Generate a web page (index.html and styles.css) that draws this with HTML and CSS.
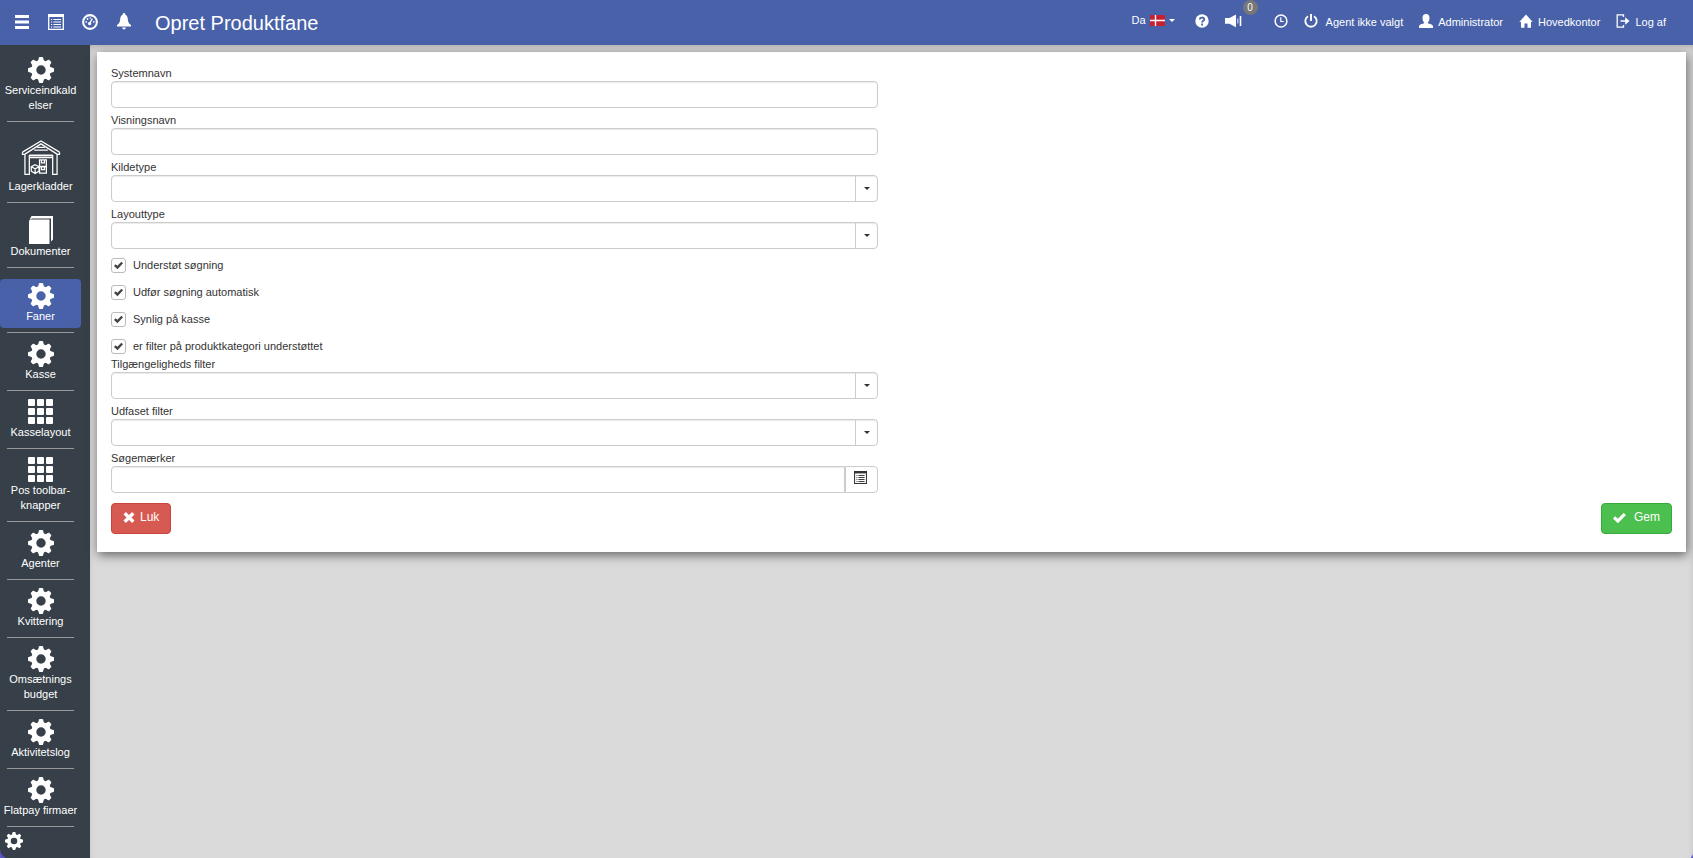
FILE: index.html
```html
<!DOCTYPE html>
<html lang="da">
<head>
  <meta charset="UTF-8">
  <title>Opret Produktfane</title>
  <link rel="stylesheet" href="styles.css">
</head>
<body>

  <!-- Shared icons -->
  <svg class="sprite" aria-hidden="true">
    <symbol id="gear" viewBox="0 0 26 26">
      <circle cx="13" cy="13" r="7.3" fill="none" stroke="currentColor" stroke-width="5.2"/>
      <g fill="currentColor">
        <path id="tooth" d="M9.8 4.5L11 .6q.2-.6.8-.6h2.4q.6 0 .8.6l1.2 3.9z"/>
        <use href="#tooth" transform="rotate(45 13 13)"/>
        <use href="#tooth" transform="rotate(90 13 13)"/>
        <use href="#tooth" transform="rotate(135 13 13)"/>
        <use href="#tooth" transform="rotate(180 13 13)"/>
        <use href="#tooth" transform="rotate(225 13 13)"/>
        <use href="#tooth" transform="rotate(270 13 13)"/>
        <use href="#tooth" transform="rotate(315 13 13)"/>
      </g>
    </symbol>
    <symbol id="grid" viewBox="0 0 26 26">
      <g fill="currentColor">
        <rect x="0" y="0" width="7" height="7" rx="1"/><rect x="9" y="0" width="7" height="7" rx="1"/><rect x="18" y="0" width="7" height="7" rx="1"/>
        <rect x="0" y="9" width="7" height="7" rx="1"/><rect x="9" y="9" width="7" height="7" rx="1"/><rect x="18" y="9" width="7" height="7" rx="1"/>
        <rect x="0" y="18" width="7" height="7" rx="1"/><rect x="9" y="18" width="7" height="7" rx="1"/><rect x="18" y="18" width="7" height="7" rx="1"/>
      </g>
    </symbol>
    <symbol id="list" viewBox="0 0 16 16">
      <path d="M.7 1h14.6v14.3H.7z" fill="none" stroke="currentColor" stroke-width="1.3"/>
      <path d="M0 0h16v3H0z" fill="currentColor"/>
      <path d="M3 5.5h1.2M3 8h1.2M3 10.5h1.2M3 13h1.2M5.5 5.5H13M5.5 8H13M5.5 10.5H13M5.5 13H13" stroke="currentColor" stroke-width="1.2"/>
    </symbol>
    <symbol id="check" viewBox="0 0 14 12">
      <path d="M0 6.6L2.4 4.2l2.8 2.6L11.5.5 14 2.8 5.3 11.6z" fill="currentColor"/>
    </symbol>
  </svg>

  <header class="topbar">
    <div class="tools">
      <button type="button" aria-label="Menu">
        <svg width="16" height="16" viewBox="0 0 16 16"><path d="M1 2.500h14M1 8h14M1 13.500h14" stroke="currentColor" stroke-width="3"/></svg>
      </button>
      <button type="button" aria-label="Liste">
        <svg width="16" height="16"><use href="#list"/></svg>
      </button>
      <button type="button" aria-label="Dashboard">
        <svg width="16" height="16" viewBox="0 0 16 16">
          <circle cx="8" cy="8" r="6.9" fill="none" stroke="currentColor" stroke-width="2.1"/>
          <path d="M7.3 9.8L10.4 4.6" stroke="currentColor" stroke-width="1.3"/>
          <circle cx="7.6" cy="9.6" r="1.7" fill="currentColor"/>
          <circle cx="4.2" cy="7.8" r=".9" fill="currentColor"/><circle cx="5.5" cy="5" r=".9" fill="currentColor"/><circle cx="8.2" cy="4" r=".8" fill="currentColor"/><circle cx="11.8" cy="7.8" r=".9" fill="currentColor"/>
        </svg>
      </button>
      <button type="button" aria-label="Notifikationer">
        <svg width="16" height="17" viewBox="0 0 16 17"><path d="M8 0c.8 0 1.300.6 1.200 1.400 1.600.7 2.500 2.300 2.600 4.600.1 3 1 4.600 3.200 6.100v1.400H1v-1.400c2.200-1.500 3.100-3.100 3.200-6.100.1-2.300 1-3.900 2.600-4.600C6.700.6 7.200 0 8 0zM6.200 14.500h3.600c0 1-.7 1.900-1.800 1.900s-1.800-.9-1.800-1.900z" fill="currentColor"/></svg>
      </button>
    </div>
    <h1>Opret Produktfane</h1>
    <nav class="account">
      <button type="button" class="language">
        Da
        <svg width="15" height="11" viewBox="0 0 15 11"><path d="M0 0h15v11H0z" fill="#c8202f"/><path d="M5.500 0v11M0 5.500h15" stroke="#fff" stroke-width="1.400"/></svg>
        <span class="caret"></span>
      </button>
      <a href="#" aria-label="Hjælp">
        <svg width="14" height="14" viewBox="0 0 14 14"><circle cx="7" cy="7" r="6.700" fill="currentColor"/><path d="M4.800 5.500C4.800 2.900 9.300 2.900 9.300 5.300 9.300 6.900 7.100 6.800 7.100 8.500M7.100 9.500v1.900" fill="none" stroke="#4861a9" stroke-width="1.800"/></svg>
      </a>
      <a href="#" class="sound" aria-label="Lyd">
        <svg width="17" height="14" viewBox="0 0 17 14"><path d="M0 4h4.500L11 .5v12.700L4.500 9.800H0z" fill="currentColor"/><path d="M12.800 4.500v5" stroke="currentColor" stroke-width="1.200" opacity=".7"/><path d="M15.500 2v10" stroke="currentColor" stroke-width="1.600"/></svg>
        <span class="badge">0</span>
      </a>
      <a href="#" aria-label="Historik">
        <svg width="14" height="14" viewBox="0 0 14 14"><circle cx="7" cy="7" r="5.900" fill="none" stroke="currentColor" stroke-width="1.500"/><path d="M6.800 3.300v4.200h3" fill="none" stroke="currentColor" stroke-width="1.200"/></svg>
      </a>
      <a href="#" class="agent">
        <svg width="14" height="14" viewBox="0 0 14 14"><path d="M4 2.200a5.700 5.700 0 1 0 6 0" fill="none" stroke="currentColor" stroke-width="1.800"/><path d="M7 0v7" stroke="currentColor" stroke-width="1.900"/></svg>
        <span>Agent ikke valgt</span>
      </a>
      <a href="#">
        <svg width="14" height="14" viewBox="0 0 14 14"><path d="M7 0c2.300 0 3.500 1.600 3.500 3.900 0 2-.7 3.600-1.700 4.500v.8c1.800.6 5.200 1.300 5.200 3.200V14H0v-1.600c0-1.900 3.400-2.600 5.200-3.200v-.8C4.200 7.500 3.500 5.900 3.500 3.900 3.500 1.600 4.700 0 7 0z" fill="currentColor"/></svg>
        <span>Administrator</span>
      </a>
      <a href="#">
        <svg width="14" height="14" viewBox="0 0 14 14"><path d="M7 .5L13.700 8H12v5.800H8.500V9.500h-3v4.300H2V8H.3z" fill="currentColor"/></svg>
        <span>Hovedkontor</span>
      </a>
      <a href="#">
        <svg width="14" height="14" viewBox="0 0 14 14"><path d="M7.500 3V.8H1.200v12.400h6.300V11" fill="none" stroke="currentColor" stroke-width="1.300"/><path d="M4.500 6.200h4.700V3.300L13.500 7l-4.300 3.700V7.800H4.500z" fill="currentColor"/></svg>
        <span>Log af</span>
      </a>
    </nav>
  </header>

  <div class="layout">
    <aside class="sidebar">
      <ul class="menu">
        <li class="first"><a href="#"><svg width="26" height="26"><use href="#gear"/></svg>Serviceindkald<br>elser</a></li>
        <li class="stock"><a href="#">
          <svg width="40" height="37" viewBox="0 0 40 38" fill="none" stroke="currentColor" stroke-width="1.300">
            <path d="M1 13.500L20 2l19 11.500M1 13.500v2.300h2.500v20.500h4.500V17h24v19.300h4.500V15.800H39v-2.300M3.500 15.500L20 5l16.500 10.500"/>
            <path d="M16 8.500h8M13 11.500h14M8 16.500h24M8 19h24"/>
            <path d="M18.500 21.500h7v6.500h-7zM18.500 28.500h7v6.500h-7zM20.500 21.500v3h3v-3M20.500 28.500v3h3v-3"/>
            <path d="M14 26.500l4 2v4.500l-4 2.500-4-2.500v-4.500zM10 28.500l4 2 4-2M14 30.500v5"/>
          </svg>Lagerkladder</a></li>
        <li class="docs"><a href="#">
          <svg width="26" height="28" viewBox="0 0 26 28"><path d="M3.500 0H25v23.500l-2 2V2.500H4L1.500 4z" fill="currentColor"/><path d="M1 5.500q0-2 2-2h18.500V28H1z" fill="currentColor"/></svg>Dokumenter</a></li>
        <li class="active"><a href="#" aria-current="page"><svg width="26" height="26"><use href="#gear"/></svg>Faner</a></li>
        <li><a href="#"><svg width="26" height="26"><use href="#gear"/></svg>Kasse</a></li>
        <li><a href="#"><svg width="26" height="26"><use href="#grid"/></svg>Kasselayout</a></li>
        <li><a href="#"><svg width="26" height="26"><use href="#grid"/></svg>Pos toolbar-<br>knapper</a></li>
        <li><a href="#"><svg width="26" height="26"><use href="#gear"/></svg>Agenter</a></li>
        <li><a href="#"><svg width="26" height="26"><use href="#gear"/></svg>Kvittering</a></li>
        <li><a href="#"><svg width="26" height="26"><use href="#gear"/></svg>Omsætnings<br>budget</a></li>
        <li><a href="#"><svg width="26" height="26"><use href="#gear"/></svg>Aktivitetslog</a></li>
        <li><a href="#"><svg width="26" height="26"><use href="#gear"/></svg>Flatpay firmaer</a></li>
      </ul>
      <button type="button" class="settings" aria-label="Indstillinger"><svg width="18" height="18"><use href="#gear"/></svg></button>
    </aside>

    <main>
      <form class="panel">
        <div class="fields">
          <label for="systemName">Systemnavn</label>
          <input type="text" id="systemName">

          <label for="displayName">Visningsnavn</label>
          <input type="text" id="displayName">

          <label for="sourceType">Kildetype</label>
          <div class="combo"><select id="sourceType"><option value=""></option></select></div>

          <label for="layoutType">Layouttype</label>
          <div class="combo"><select id="layoutType"><option value=""></option></select></div>

          <div class="checks">
            <label><input type="checkbox" checked> Understøt søgning</label>
            <label><input type="checkbox" checked> Udfør søgning automatisk</label>
            <label><input type="checkbox" checked> Synlig på kasse</label>
            <label><input type="checkbox" checked> er filter på produktkategori understøttet</label>
          </div>

          <label for="availability">Tilgængeligheds filter</label>
          <div class="combo"><select id="availability"><option value=""></option></select></div>

          <label for="phasedOut">Udfaset filter</label>
          <div class="combo"><select id="phasedOut"><option value=""></option></select></div>

          <label for="searchTags">Søgemærker</label>
          <div class="picker">
            <input type="text" id="searchTags">
            <button type="button" aria-label="Vælg søgemærker"><svg width="13" height="13"><use href="#list"/></svg></button>
          </div>
        </div>

        <div class="actions">
          <button type="button" class="btn close">
            <svg width="12" height="11" viewBox="0 0 12 11"><path d="M1.700 1.200l8.600 8.600M10.300 1.200L1.700 9.800" stroke="currentColor" stroke-width="3.400"/></svg>
            Luk
          </button>
          <button type="submit" class="btn save">
            <svg width="13" height="12"><use href="#check"/></svg>
            Gem
          </button>
        </div>
      </form>
    </main>
  </div>

</body>
</html>
```
FILE: styles.css
```css
* {
  box-sizing: border-box;
}

body {
  display: flex;
  flex-direction: column;
  min-height: 100vh;
  margin: 0;
  background-color: #5b55c8;
  color: #333;
  font-family: "Liberation Sans", Arial, sans-serif;
  font-size: 11px;
  line-height: 15px;
}

a {
  color: inherit;
  text-decoration: none;
}

button,
input,
select {
  font: inherit;
  color: inherit;
}

button {
  cursor: pointer;
}

svg {
  flex: none;
}

.sprite {
  position: absolute;
  width: 0;
  height: 0;
}

/* Top bar */
.topbar {
  display: flex;
  align-items: center;
  height: 45px;
  padding: 0 27px 0 14px;
  background-color: #4861a9;
  color: #fff;
}

.topbar button {
  display: flex;
  align-items: center;
  padding: 0;
  border: none;
  background: none;
}

.tools {
  display: flex;
  align-items: center;
  gap: 18px;
  padding-bottom: 2px;
}

.topbar h1 {
  margin: 0 0 0 23px;
  font-size: 20px;
  font-weight: normal;
  line-height: 24px;
}

.account {
  display: flex;
  align-items: center;
  gap: 16px;
  margin-left: auto;
  padding-bottom: 4px;
}

.account a {
  display: flex;
  align-items: center;
  gap: 5px;
}

.account a span {
  padding-top: 4px;
}

.account .agent {
  gap: 8px;
}

.account .language {
  gap: 4px;
  margin-right: 4px;
}

.caret {
  border: 3px solid transparent;
  border-top-color: currentColor;
  border-bottom: none;
}

.sound {
  position: relative;
  margin-right: 16px;
}

.account .badge {
  position: absolute;
  top: -14px;
  left: 18px;
  width: 15px;
  height: 15px;
  padding: 0;
  border-radius: 50%;
  background-color: #777;
  font-size: 10px;
  text-align: center;
}

/* Sidebar */
.layout {
  display: flex;
  flex: 1;
}

.sidebar {
  width: 90px;
  border-bottom-left-radius: 10px;
  background-color: #373f49;
  color: #fff;
}

.menu {
  width: 81px;
  margin: 0;
  padding: 0;
  list-style: none;
}

.menu li {
  padding-top: 4px;
}

.menu li::after {
  content: "";
  display: block;
  height: 1px;
  margin: 4px 7px 0;
  background-color: #999;
}

.menu a {
  display: flex;
  flex-direction: column;
  align-items: center;
  padding: 4px 0;
  border-radius: 4px;
  text-align: center;
}

.menu .first {
  padding-top: 8px;
}

.menu .stock {
  padding-top: 13px;
}

.menu .stock svg {
  margin-bottom: 3px;
}

.menu .docs {
  padding-top: 9px;
}

.menu .active {
  padding-top: 11px;
}

.menu .active a {
  background-color: #4861a9;
}

.settings {
  display: block;
  padding: 5px;
  border: none;
  background: none;
}

/* Content */
main {
  flex: 1;
  padding: 7px;
  border-bottom-right-radius: 6px;
  background-color: #dadada;
  box-shadow: inset 0 4px 8px -4px rgba(0, 0, 0, 0.3);
}

.panel {
  padding: 14px 14px 18px;
  background-color: #fff;
  box-shadow: 1px 3px 10px rgba(0, 0, 0, 0.55);
}

.fields {
  width: calc(50% - 14px);
}

.fields > label {
  display: block;
  padding-top: 5px;
}

.fields > label:first-child {
  padding-top: 0;
}

.fields input[type="text"],
.fields select {
  display: block;
  width: 100%;
  height: 27px;
  padding: 0 8px;
  border: 1px solid #ccc;
  border-radius: 4px;
  background-color: #fff;
  box-shadow: inset 0 1px 1px rgba(0, 0, 0, 0.08);
}

.fields select {
  appearance: none;
}

/* Arrow part lies in the same grid cell as the select */
.combo {
  display: grid;
}

.combo::before,
.combo::after,
.combo select {
  grid-area: 1 / 1;
}

.combo::before,
.combo::after {
  content: "";
  z-index: 1;
  justify-self: end;
  pointer-events: none;
}

.combo::before {
  width: 22px;
  border-left: 1px solid #ccc;
}

.combo::after {
  align-self: center;
  margin-right: 8px;
  border: 3px solid transparent;
  border-top-color: #333;
  border-bottom: none;
}

.checks label {
  display: flex;
  align-items: center;
  gap: 7px;
  height: 15px;
  margin-top: 12px;
}

.checks label:first-child {
  margin-top: 9px;
}

.checks input {
  display: grid;
  place-items: center;
  appearance: none;
  width: 15px;
  height: 15px;
  margin: 0;
  border: 1px solid #bbb;
  border-radius: 3px;
  background-color: #fff;
}

.checks input:checked::before {
  content: "";
  width: 9px;
  height: 8px;
  background-color: #444;
  clip-path: polygon(0 55%, 18% 34%, 38% 54%, 82% 4%, 100% 22%, 39% 96%);
}

.checks + label {
  padding-top: 3px;
}

.picker {
  display: flex;
}

.fields .picker input {
  flex: 1;
  border-radius: 4px 0 0 4px;
}

.picker button {
  width: 33px;
  padding: 0 0 0 8px;
  border: 1px solid #ccc;
  border-radius: 0 4px 4px 0;
  background-color: #fff;
  text-align: left;
}

.actions {
  display: flex;
  justify-content: space-between;
  margin-top: 10px;
}

.btn {
  display: flex;
  align-items: center;
  gap: 5px;
  height: 31px;
  padding: 0 11px 2px;
  border: 1px solid;
  border-radius: 4px;
  color: #fff;
  font-size: 12px;
}

.close {
  border-color: #c9443c;
  background-color: #d65a52;
}

.save {
  gap: 8px;
  border-color: #36ab3b;
  background-color: #4bc04f;
}
```
